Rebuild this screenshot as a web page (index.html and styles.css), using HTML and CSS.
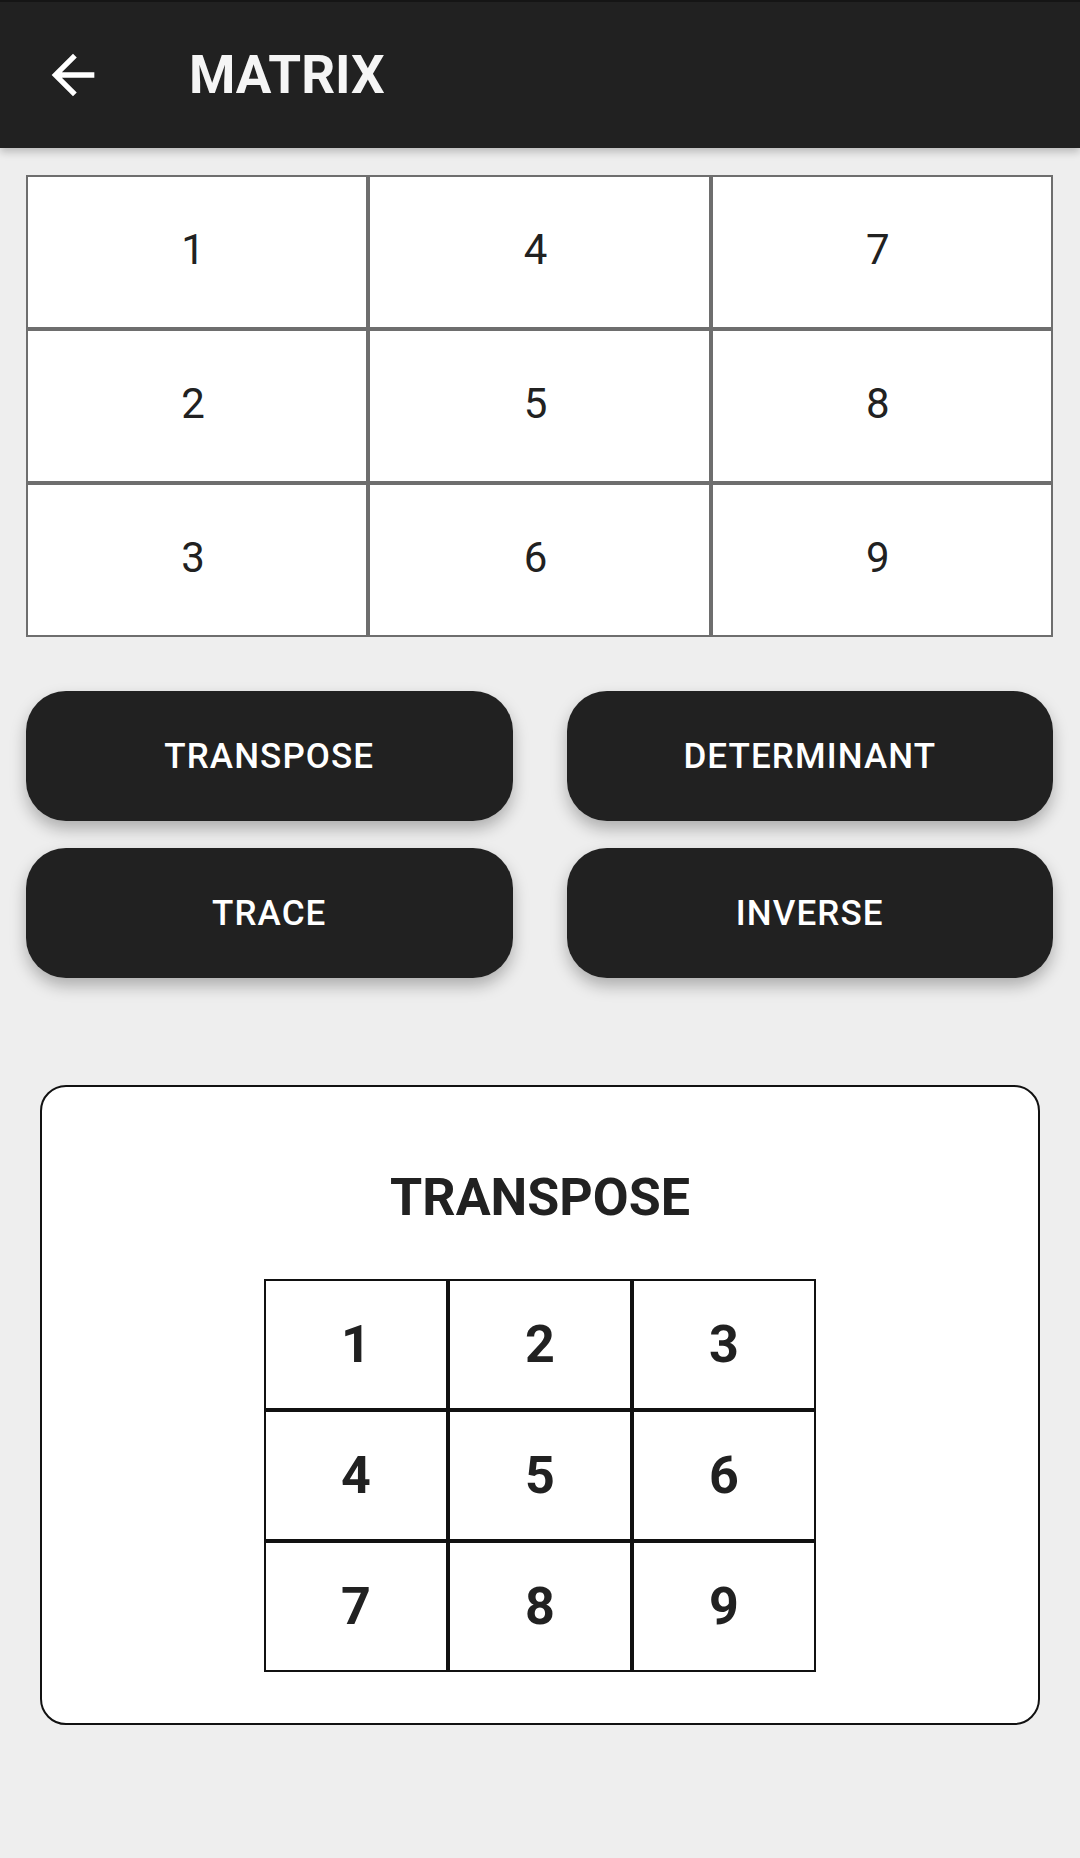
FILE: index.html
```html
<!DOCTYPE html>
<html lang="en">
<head>
  <meta charset="UTF-8" />
  <title>Matrix</title>
  <meta name="viewport" content="width=device-width, initial-scale=1.0" />
  <link rel="stylesheet" href="styles.css">
</head>
<body>
  <header class="app-bar">
    <svg class="back" viewBox="0 0 24 24" width="64" height="64">
      <path d="M20 11H7.83l5.59-5.59L12 4l-8 8 8 8 1.41-1.41L7.83 13H20v-2z" fill="#ffffff"/>
    </svg>
    <h1>MATRIX</h1>
  </header>

  <main class="content">
    <div class="matrix-input">
      <div class="cell">1</div>
      <div class="cell">4</div>
      <div class="cell">7</div>
      <div class="cell">2</div>
      <div class="cell">5</div>
      <div class="cell">8</div>
      <div class="cell">3</div>
      <div class="cell">6</div>
      <div class="cell">9</div>
    </div>

    <div class="actions">
      <button>TRANSPOSE</button>
      <button>DETERMINANT</button>
      <button>TRACE</button>
      <button>INVERSE</button>
    </div>

    <div class="result-box">
      <h2>TRANSPOSE</h2>
      <div class="matrix-result">
        <div class="rcell">1</div>
        <div class="rcell">2</div>
        <div class="rcell">3</div>
        <div class="rcell">4</div>
        <div class="rcell">5</div>
        <div class="rcell">6</div>
        <div class="rcell">7</div>
        <div class="rcell">8</div>
        <div class="rcell">9</div>
      </div>
    </div>
  </main>
</body>
</html>
```

FILE: styles.css
```css
body { margin: 0; background: #eeeeee; font-family: Roboto, "Liberation Sans", sans-serif; color: #212121; }

.app-bar {
  height: 148px;
  background: #212121;
  border-top: 2px solid #151515;
  box-sizing: border-box;
  display: flex;
  align-items: center;
  padding-left: 41px;
  box-shadow: 0 4px 8px rgba(0,0,0,0.22);
  position: relative;
}
.back { display: block; }
.app-bar h1 { margin: 0 0 0 84px; color: #f5f5f5; font-size: 53px; font-weight: 700; }

.content { padding: 27px 27px 0 26px; }

.matrix-input {
  display: grid;
  grid-template-columns: repeat(3, 1fr);
  grid-auto-rows: 154px;
}
.cell {
  background: #ffffff;
  border: 2px solid #6e6e6e;
  display: flex;
  align-items: center;
  justify-content: center;
  font-size: 42px;
  padding: 0 8px 6px 0;
  box-sizing: border-box;
}

.actions {
  display: grid;
  grid-template-columns: 1fr 1fr;
  column-gap: 54px;
  row-gap: 27px;
  margin-top: 54px;
}
.actions button {
  height: 130px;
  background: #212121;
  color: #ffffff;
  border: none;
  border-radius: 40px;
  font-family: Roboto, "Liberation Sans", sans-serif;
  font-size: 35px;
  font-weight: 500;
  letter-spacing: 1.1px;
  box-shadow: 0 8px 16px rgba(0,0,0,0.27);
}

.result-box {
  margin: 107px 13px 0 14px;
  background: #ffffff;
  border: 2px solid #111111;
  border-radius: 26px;
  padding: 80px 0 51px;
  text-align: center;
}
.result-box h2 { margin: 0 0 51px; font-size: 52px; font-weight: 700; }

.matrix-result {
  display: inline-grid;
  grid-template-columns: repeat(3, 184px);
  grid-auto-rows: 131px;
}
.rcell {
  border: 2.5px solid #111111;
  display: flex;
  align-items: center;
  justify-content: center;
  font-size: 52px;
  font-weight: 700;
}
```
